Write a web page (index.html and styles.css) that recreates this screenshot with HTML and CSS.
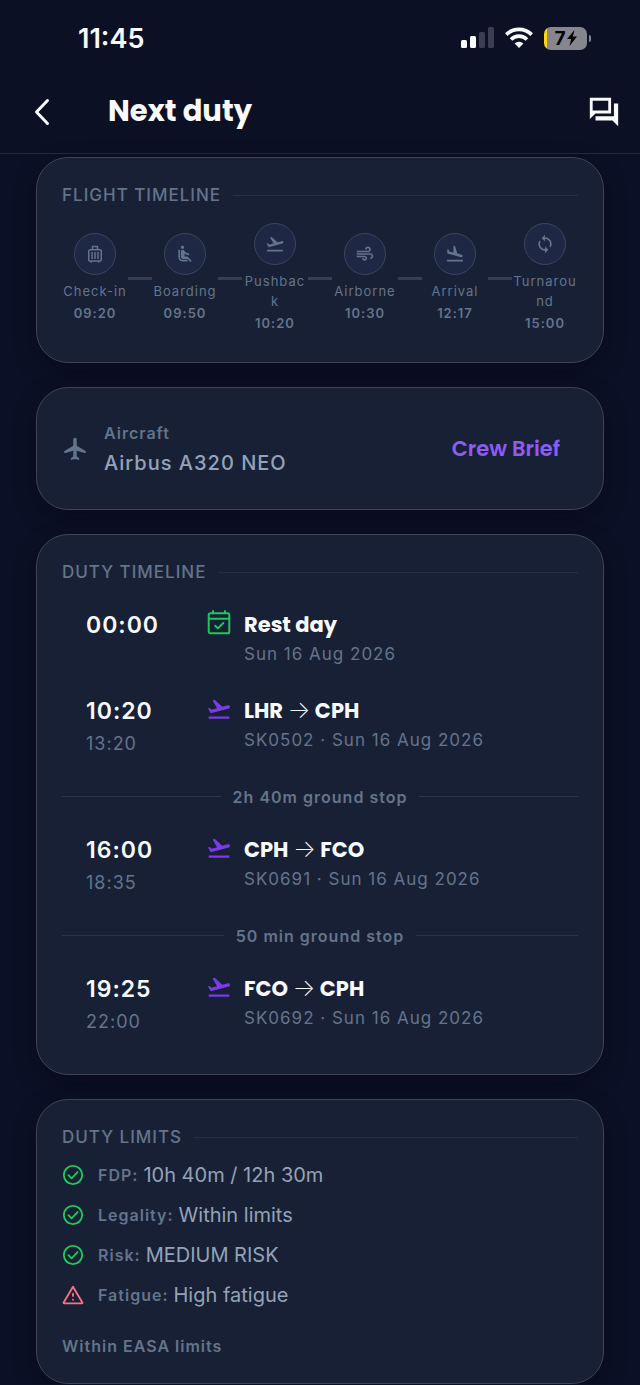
FILE: index.html
```html
<!DOCTYPE html>
<html lang="en">
<head>
    <meta charset="UTF-8">
    <meta name="viewport" content="width=device-width, initial-scale=1.0">
    <title>Next duty</title>
    <link rel="stylesheet" href="styles.css">
</head>
<body>
    <!-- Shared icons -->
    <svg class="sprite" aria-hidden="true">
        <symbol id="takeoff" viewBox="0 0 24 24">
            <path d="M2.5 19h19v2h-19zm19.57-9.36c-.21-.8-1.04-1.28-1.84-1.06L14.92 10l-6.9-6.43-1.93.51 4.14 7.17-4.97 1.33-1.97-1.54-1.45.39 2.59 4.49L21 11.49c.81-.23 1.28-1.05 1.07-1.85z"/>
        </symbol>
        <symbol id="check" viewBox="0 0 24 24">
            <g fill="none" stroke="currentColor" stroke-width="2" stroke-linecap="round" stroke-linejoin="round">
                <circle cx="12" cy="12" r="10"/>
                <path d="M7 12.2l3.400 3.400 6.600-6.800"/>
            </g>
        </symbol>
    </svg>

    <header class="header">
        <div class="status-bar">
            <span class="clock">11:45</span>
            <div class="status-icons">
                <svg class="signal" viewBox="0 0 33 22" aria-hidden="true">
                    <rect x="0" y="13" width="6" height="8" rx="1.5"/>
                    <rect x="9" y="9" width="6" height="12" rx="1.5"/>
                    <rect class="dim" x="18" y="5" width="6" height="16" rx="1.5"/>
                    <rect class="dim" x="27" y="0" width="6" height="21" rx="1.5"/>
                </svg>
                <svg class="wifi" viewBox="0 0 28 22" aria-hidden="true">
                    <g fill="none" stroke="currentColor" stroke-width="3.6">
                        <path d="M1.3 7.6a18 18 0 0 1 25.4 0"/>
                        <path d="M6 12.4a11.3 11.3 0 0 1 16 0"/>
                    </g>
                    <path d="M14 21l-4.400-4.400a6.200 6.200 0 0 1 8.800 0z"/>
                </svg>
                <div class="battery">
                    <span class="battery-body">7<svg class="bolt" viewBox="0 0 10 16" aria-hidden="true"><path d="M7.500 0L0 9h4.200L2.500 16 10 6.600H5.800z"/></svg></span>
                    <span class="battery-tip"></span>
                </div>
            </div>
        </div>
        <div class="app-bar">
            <button class="icon-btn" aria-label="Back">
                <svg class="back-icon" viewBox="0 0 16 28" aria-hidden="true"><path d="M13.500 2.500L2.500 14l11 11.500"/></svg>
            </button>
            <h1>Next duty</h1>
            <button class="icon-btn" aria-label="Messages">
                <svg class="chat-icon" viewBox="0 0 24 24" aria-hidden="true"><path d="M17 2H2v15l4-4h11V2zm-2 2v7H4V4h11zm7 2h-3v9H6v3h12l4 4V6z"/></svg>
            </button>
        </div>
    </header>

    <main class="content">
        <section class="card">
            <h2 class="section-title">FLIGHT TIMELINE</h2>
            <div class="steps">
                <div class="step">
                    <span class="step-icon">
                        <svg viewBox="0 0 24 24" aria-hidden="true">
                            <g fill="none" stroke="currentColor" stroke-width="1.8">
                                <rect x="4.500" y="7" width="15" height="13.500" rx="1.500"/>
                                <path d="M9 7V2.900h6V7M8.500 9.500v8.500M12 9.500v8.500M15.500 9.500v8.500M7.500 20.500v2M16.500 20.500v2"/>
                            </g>
                        </svg>
                    </span>
                    <span class="step-name">Check-in</span>
                    <span class="step-time">09:20</span>
                </div>
                <span class="connector"></span>
                <div class="step">
                    <span class="step-icon">
                        <svg viewBox="0 0 24 24" aria-hidden="true"><path d="M7.590 5.410c-.78-.78-.78-2.050 0-2.830.78-.78 2.050-.78 2.830 0 .78.78.78 2.050 0 2.830-.79.79-2.050.79-2.830 0zM6 16V7H4v9c0 2.760 2.240 5 5 5h6v-2H9c-1.660 0-3-1.340-3-3zm14 4.070L14.930 15H11.500v-3.680c1.400 1.150 3.600 2.160 5.500 2.160v-2.160c-1.660.02-3.610-.87-4.670-2.040l-1.400-1.550c-.19-.21-.43-.38-.69-.5-.29-.14-.62-.23-.96-.23h-.03C8.010 7 7 8.010 7 9.250V15c0 1.660 1.340 3 3 3h5.070l3.500 3.500L20 20.070z"/></svg>
                    </span>
                    <span class="step-name">Boarding</span>
                    <span class="step-time">09:50</span>
                </div>
                <span class="connector"></span>
                <div class="step">
                    <span class="step-icon"><svg aria-hidden="true"><use href="#takeoff"/></svg></span>
                    <span class="step-name">Pushback</span>
                    <span class="step-time">10:20</span>
                </div>
                <span class="connector"></span>
                <div class="step">
                    <span class="step-icon">
                        <svg viewBox="0 0 24 24" aria-hidden="true"><path d="M14.500 17c0 1.650-1.350 3-3 3s-3-1.350-3-3h2c0 .55.45 1 1 1s1-.45 1-1-.45-1-1-1H2v-2h9.500c1.650 0 3 1.350 3 3zM19 6.500C19 4.570 17.430 3 15.500 3S12 4.570 12 6.500h2c0-.83.67-1.500 1.500-1.500s1.500.67 1.500 1.500S16.330 8 15.500 8H2v2h13.500c1.930 0 3.500-1.570 3.500-3.500zm-.5 4.500H2v2h16.500c.83 0 1.500.67 1.500 1.500s-.67 1.500-1.500 1.500v2c1.930 0 3.500-1.570 3.500-3.500S20.430 11 18.500 11z"/></svg>
                    </span>
                    <span class="step-name">Airborne</span>
                    <span class="step-time">10:30</span>
                </div>
                <span class="connector"></span>
                <div class="step">
                    <span class="step-icon">
                        <svg viewBox="0 0 24 24" aria-hidden="true"><path d="M2.500 19h19v2h-19zm7.180-5.730l4.350 1.160 5.310 1.420c.8.21 1.620-.26 1.840-1.060.21-.8-.26-1.620-1.060-1.840l-5.310-1.420-2.760-9.020L10.120 2v8.280L5.150 8.950l-.93-2.320-1.450-.39v5.170l6.910 1.860z"/></svg>
                    </span>
                    <span class="step-name">Arrival</span>
                    <span class="step-time">12:17</span>
                </div>
                <span class="connector"></span>
                <div class="step">
                    <span class="step-icon">
                        <svg viewBox="0 0 24 24" aria-hidden="true"><path d="M12 4V1L8 5l4 4V6c3.310 0 6 2.690 6 6 0 1.010-.25 1.970-.7 2.800l1.460 1.460A7.930 7.930 0 0 0 20 12c0-4.420-3.580-8-8-8zm0 14c-3.310 0-6-2.690-6-6 0-1.010.25-1.970.7-2.800L5.240 7.740A7.930 7.930 0 0 0 4 12c0 4.420 3.580 8 8 8v3l4-4-4-4v3z"/></svg>
                    </span>
                    <span class="step-name">Turnaround</span>
                    <span class="step-time">15:00</span>
                </div>
            </div>
        </section>

        <section class="card aircraft">
            <svg class="plane-icon" viewBox="0 0 24 24" aria-hidden="true"><path d="M12 1.500c-.9 0-1.600.7-1.600 1.600V9L2.600 13.700c-.4.250-.6.600-.6 1.050 0 .8.600 1.200 1.300 1l7.100-2.250V19l-2 1.400c-.3.200-.4.500-.4.800 0 .6.500.95 1.050.8L12 21.200l2.950.8c.55.150 1.050-.2 1.050-.8 0-.3-.1-.6-.4-.8l-2-1.400v-5.500l7.100 2.250c.7.200 1.300-.2 1.300-1 0-.45-.2-.8-.6-1.050L13.600 9V3.100c0-.9-.7-1.600-1.600-1.600z"/></svg>
            <div class="aircraft-info">
                <span class="label">Aircraft</span>
                <span class="aircraft-name">Airbus A320 NEO</span>
            </div>
            <button class="brief-btn">Crew Brief</button>
        </section>

        <section class="card">
            <h2 class="section-title">DUTY TIMELINE</h2>
            <div class="duties">
                <div class="duty">
                    <div class="times">
                        <span class="start">00:00</span>
                    </div>
                    <svg class="duty-icon rest" viewBox="0 0 24 24" aria-hidden="true">
                        <g fill="none" stroke="currentColor" stroke-width="1.8" stroke-linecap="round" stroke-linejoin="round">
                            <rect x="2.500" y="3" width="19" height="18.500" rx="1.500"/>
                            <path d="M2.500 8h19M6.500 3V1M17.500 3V1M8.500 14.500l2.500 2.500 5-5"/>
                        </g>
                    </svg>
                    <div>
                        <h3>Rest day</h3>
                        <p>Sun 16 Aug 2026</p>
                    </div>
                </div>
                <div class="duty">
                    <div class="times">
                        <span class="start">10:20</span>
                        <span class="end">13:20</span>
                    </div>
                    <svg class="duty-icon" aria-hidden="true"><use href="#takeoff"/></svg>
                    <div>
                        <h3>LHR <span class="arrow">→</span> CPH</h3>
                        <p>SK0502 · Sun 16 Aug 2026</p>
                    </div>
                </div>
                <div class="ground-stop">2h 40m ground stop</div>
                <div class="duty">
                    <div class="times">
                        <span class="start">16:00</span>
                        <span class="end">18:35</span>
                    </div>
                    <svg class="duty-icon" aria-hidden="true"><use href="#takeoff"/></svg>
                    <div>
                        <h3>CPH <span class="arrow">→</span> FCO</h3>
                        <p>SK0691 · Sun 16 Aug 2026</p>
                    </div>
                </div>
                <div class="ground-stop">50 min ground stop</div>
                <div class="duty">
                    <div class="times">
                        <span class="start">19:25</span>
                        <span class="end">22:00</span>
                    </div>
                    <svg class="duty-icon" aria-hidden="true"><use href="#takeoff"/></svg>
                    <div>
                        <h3>FCO <span class="arrow">→</span> CPH</h3>
                        <p>SK0692 · Sun 16 Aug 2026</p>
                    </div>
                </div>
            </div>
        </section>

        <section class="card">
            <h2 class="section-title">DUTY LIMITS</h2>
            <ul class="limits">
                <li>
                    <svg class="limit-icon" aria-hidden="true"><use href="#check"/></svg>
                    <span class="label">FDP:</span>
                    <span class="value">10h 40m / 12h 30m</span>
                </li>
                <li>
                    <svg class="limit-icon" aria-hidden="true"><use href="#check"/></svg>
                    <span class="label">Legality:</span>
                    <span class="value">Within limits</span>
                </li>
                <li>
                    <svg class="limit-icon" aria-hidden="true"><use href="#check"/></svg>
                    <span class="label">Risk:</span>
                    <span class="value">MEDIUM RISK</span>
                </li>
                <li>
                    <svg class="limit-icon warning" viewBox="0 0 24 24" aria-hidden="true">
                        <g fill="none" stroke="currentColor" stroke-width="2" stroke-linecap="round" stroke-linejoin="round">
                            <path d="M12 3L1.800 20.200c-.3.500 0 1 .6 1h19.200c.6 0 .9-.5.600-1z"/>
                            <path d="M12 10.500v2.500M12 17v.2"/>
                        </g>
                    </svg>
                    <span class="label">Fatigue:</span>
                    <span class="value">High fatigue</span>
                </li>
            </ul>
            <p class="label">Within EASA limits</p>
        </section>
    </main>
</body>
</html>
```

FILE: styles.css
```css
* {
    box-sizing: border-box;
}

body {
    margin: 0;
    background-color: #0b1026;
    color: #f8fafc;
    font-family: Inter, "Liberation Sans", sans-serif;
}

h1, h2, h3, p, ul {
    margin: 0;
    padding: 0;
}

button {
    background: none;
    border: none;
    padding: 0;
    color: inherit;
    cursor: pointer;
}

svg {
    display: block;
    fill: currentColor;
}

.sprite {
    display: none;
}

/* Header */
.header {
    background-color: #0b1024;
    border-bottom: 1px solid #252a3b;
}

.status-bar {
    display: flex;
    justify-content: space-between;
    align-items: center;
    height: 70px;
    padding: 6px 49px 0 78px;
}

.clock {
    font-size: 27px;
    font-weight: 600;
}

.status-icons {
    display: flex;
    align-items: center;
    gap: 11px;
}

.signal {
    width: 33px;
    height: 22px;
}

.dim {
    opacity: 0.2;
}

.wifi {
    width: 28px;
    height: 22px;
}

.battery {
    display: flex;
    align-items: center;
    gap: 2px;
}

.battery-body {
    display: flex;
    justify-content: center;
    align-items: center;
    gap: 1px;
    width: 43px;
    height: 23px;
    border-radius: 7px;
    background: linear-gradient(to right, #ffd60a 3px, #85868f 3px);
    color: #000;
    font-size: 19px;
    font-weight: 700;
}

.bolt {
    width: 10px;
    height: 16px;
}

.battery-tip {
    width: 2px;
    height: 7px;
    border-radius: 0 2px 2px 0;
    background-color: #85868f;
}

.app-bar {
    display: flex;
    align-items: center;
    height: 83px;
    padding: 0 19px 0 32px;
}

.app-bar h1 {
    flex: 1;
    padding-left: 56px;
    font-family: Poppins, Inter, sans-serif;
    font-size: 29px;
    font-weight: 700;
}

.back-icon {
    width: 20px;
    height: 28px;
    fill: none;
    stroke: currentColor;
    stroke-width: 3;
    stroke-linecap: round;
    stroke-linejoin: round;
}

.chat-icon {
    width: 34px;
    height: 34px;
}

/* Cards */
.content {
    display: flex;
    flex-direction: column;
    gap: 24px;
    padding: 3px 36px 0;
}

.card {
    padding: 25px;
    border: 1px solid #3f4556;
    border-radius: 32px;
    background-color: #182036;
    box-shadow: 0 8px 24px rgba(0, 0, 0, 0.3);
}

.section-title {
    display: flex;
    align-items: center;
    gap: 12px;
    color: #64748b;
    font-size: 17px;
    font-weight: 500;
    line-height: 24px;
    letter-spacing: 1px;
}

.section-title::after {
    content: "";
    flex: 1;
    height: 1px;
    background-color: #272f43;
}

.label {
    color: #64748b;
    font-size: 16px;
    font-weight: 600;
    line-height: 24px;
    letter-spacing: 1px;
}

/* Flight timeline */
.steps {
    display: flex;
    align-items: center;
    margin: 16px 0 4px;
}

.step {
    flex: 1;
    min-width: 0;
    display: flex;
    flex-direction: column;
    align-items: center;
    color: #64748b;
    font-size: 13px;
    text-align: center;
    letter-spacing: 1px;
    line-height: 20px;
}

.step-icon {
    display: flex;
    justify-content: center;
    align-items: center;
    width: 42px;
    height: 42px;
    margin-bottom: 6px;
    border: 1px solid #3b455c;
    border-radius: 50%;
    background-color: #1e2744;
}

.step-icon svg {
    width: 20px;
    height: 20px;
}

.step-name {
    max-width: 100%;
    overflow-wrap: anywhere;
}

.step-time {
    margin-top: 2px;
    font-weight: 600;
}

.connector {
    width: 24px;
    height: 3px;
    background-color: #363d50;
}

/* Aircraft */
.aircraft {
    display: flex;
    align-items: center;
    gap: 16px;
    min-height: 123px;
}

.plane-icon {
    width: 26px;
    height: 26px;
    color: #64748b;
}

.aircraft-info {
    flex: 1;
    display: flex;
    flex-direction: column;
    gap: 4px;
}

.aircraft-name {
    color: #94a3b8;
    font-size: 20px;
    font-weight: 500;
    line-height: 28px;
    letter-spacing: 1px;
}

.brief-btn {
    padding: 8px 18px;
    color: #8b5cf6;
    font-family: Poppins, Inter, sans-serif;
    font-size: 21px;
    font-weight: 600;
}

/* Duty timeline */
.duties {
    margin: 14px 0 1px;
}

.duty {
    display: grid;
    grid-template-columns: 120px 38px 1fr;
    min-height: 86px;
    padding: 12px 24px;
}

.times {
    display: flex;
    flex-direction: column;
    gap: 4px;
    letter-spacing: 1px;
}

.start {
    font-size: 23px;
    font-weight: 600;
    line-height: 30px;
}

.end {
    color: #64748b;
    font-size: 18px;
    line-height: 28px;
}

.duty-icon {
    width: 26px;
    height: 26px;
    color: #7c3aed;
}

.rest {
    color: #22c55e;
}

.duty h3 {
    font-family: Poppins, Inter, sans-serif;
    font-size: 21px;
    font-weight: 700;
    line-height: 30px;
}

.arrow {
    font-family: Inter, sans-serif;
    font-size: 24px;
    font-weight: 200;
    line-height: 20px;
}

.duty p {
    color: #64748b;
    font-size: 17px;
    line-height: 28px;
    letter-spacing: 1px;
}

.ground-stop {
    display: flex;
    align-items: center;
    gap: 12px;
    height: 53px;
    color: #64748b;
    font-size: 16px;
    font-weight: 600;
    letter-spacing: 1px;
}

.ground-stop::before,
.ground-stop::after {
    content: "";
    flex: 1;
    height: 1px;
    background-color: #2c3448;
}

/* Duty limits */
.limits {
    margin: 6px 0 19px;
    list-style: none;
}

.limits li {
    display: flex;
    align-items: center;
    gap: 5px;
    height: 40px;
}

.limit-icon {
    width: 22px;
    height: 22px;
    margin-right: 9px;
    color: #22c55e;
}

.warning {
    color: #fb7185;
}

.value {
    color: #94a3b8;
    font-size: 20px;
}
```
